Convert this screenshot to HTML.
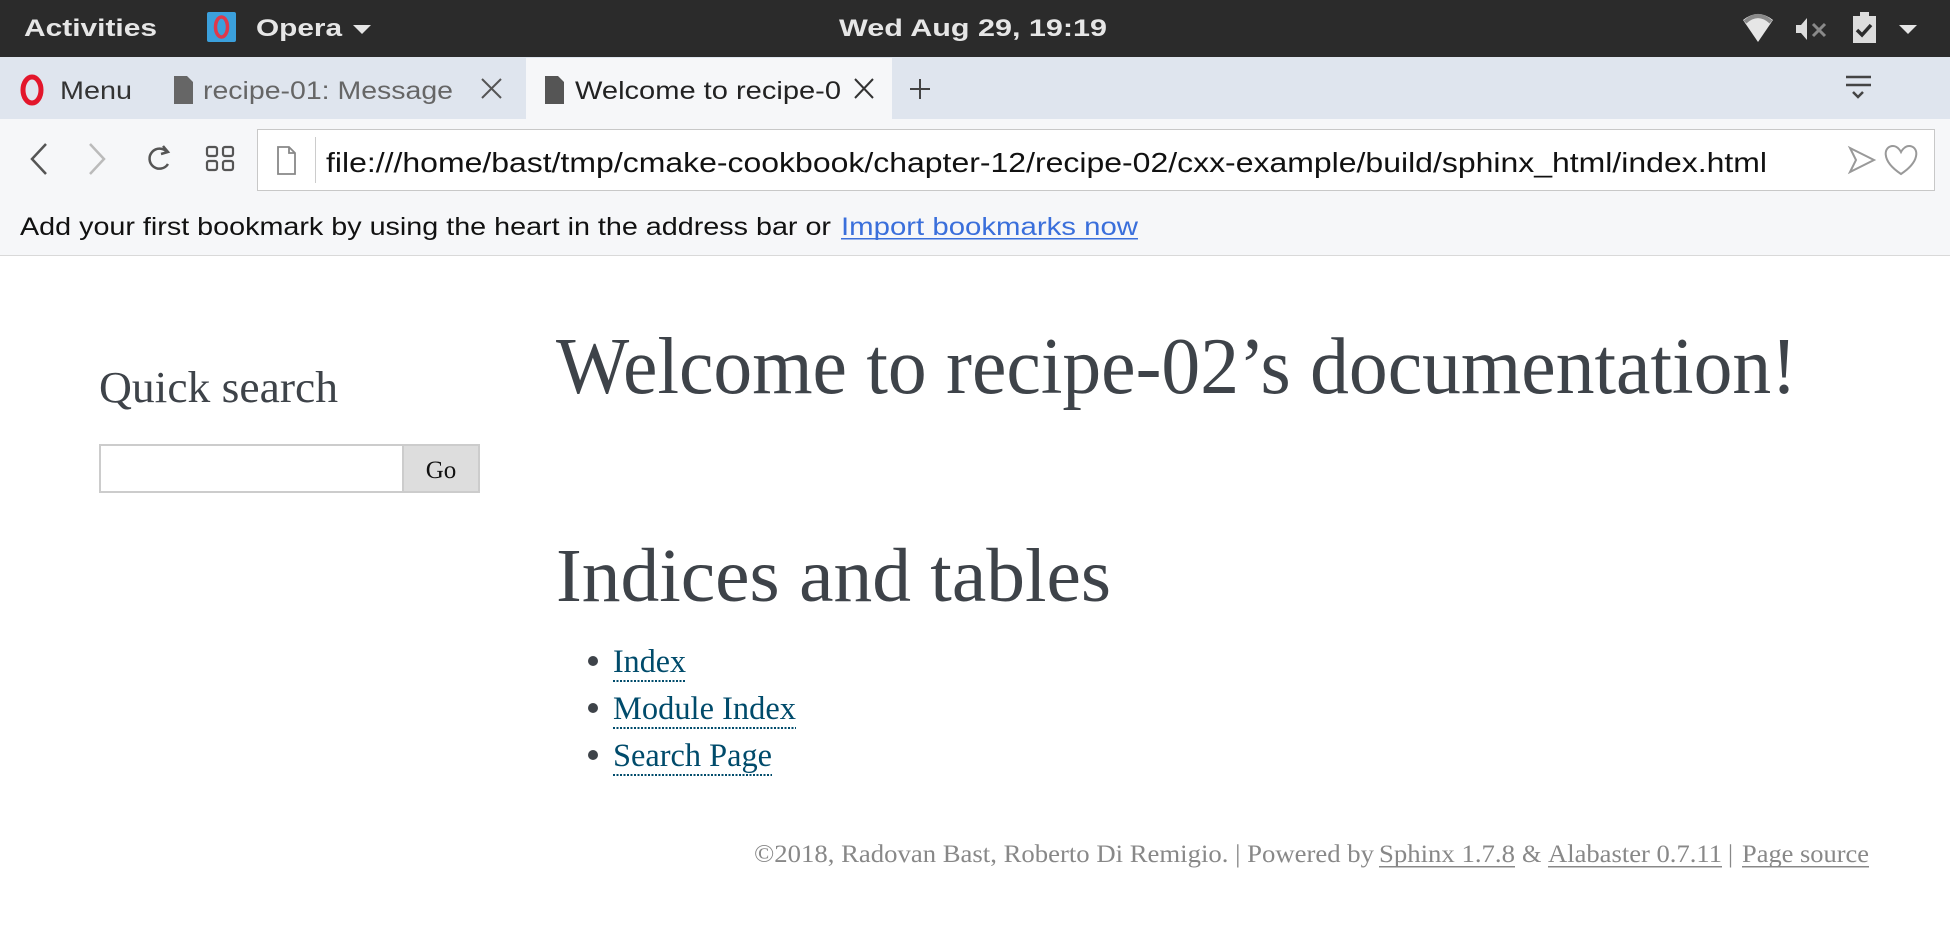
<!DOCTYPE html>
<html><head><meta charset="utf-8"><style>
html,body{margin:0;padding:0;background:#fff;width:1950px;height:943px;overflow:hidden}
svg{display:block}
</style></head><body>
<svg width="1950" height="943" viewBox="0 0 1950 943" xmlns="http://www.w3.org/2000/svg">
<rect width="1950" height="943" fill="#fff"/>
<!-- top bar -->
<rect width="1950" height="57" fill="#2b2b2b"/>
<g font-family="Liberation Sans, DejaVu Sans, sans-serif" font-weight="bold" font-size="24" fill="#e6e6e6">
<text x="24" y="36" textLength="133" lengthAdjust="spacingAndGlyphs">Activities</text>
<text x="256" y="36" textLength="86" lengthAdjust="spacingAndGlyphs">Opera</text>
<text x="839" y="36" textLength="268" lengthAdjust="spacingAndGlyphs">Wed Aug 29, 19:19</text>
</g>
<rect x="207" y="12" width="29" height="30" rx="2" fill="#3ba0dc"/>
<ellipse cx="221.5" cy="27" rx="6" ry="10" fill="none" stroke="#e0384a" stroke-width="3.5"/>
<path d="M353 25 L371 25 L362 34 Z" fill="#e6e6e6"/>
<path d="M1743 20 Q1758 8 1773 20 L1758 42 Z" fill="#e6e6e6"/>
<path d="M1745 22 Q1758 10 1771 22" stroke="#8a8a8a" stroke-width="4" fill="none"/>
<path d="M1796 25 h5 l6 -7 v22 l-6 -7 h-5 Z" fill="#dcdcdc"/>
<path d="M1813 24 l12 12 M1825 24 l-12 12" stroke="#8a8a8a" stroke-width="3"/>
<rect x="1853" y="16" width="23" height="27" fill="#dcdcdc"/><rect x="1860" y="12" width="9" height="5" fill="#dcdcdc"/>
<path d="M1857 30 l5 5 l9 -10" stroke="#2b2b2b" stroke-width="3.5" fill="none"/>
<path d="M1899 25 L1917 25 L1908 34 Z" fill="#e6e6e6"/>
<!-- tab bar -->
<rect y="57" width="1950" height="62" fill="#dfe5ee"/>
<rect x="526" y="58" width="366" height="62" fill="#f6f7f9"/>
<ellipse cx="32" cy="90" rx="9" ry="13" fill="none" stroke="#e3162b" stroke-width="5"/>
<g font-family="Liberation Sans, DejaVu Sans, sans-serif" font-size="25">
<text x="60" y="99" fill="#333" textLength="72" lengthAdjust="spacingAndGlyphs">Menu</text>
<text x="203" y="99" fill="#666" textLength="250" lengthAdjust="spacingAndGlyphs">recipe-01: Message</text>
<text x="575" y="99" fill="#222" textLength="266" lengthAdjust="spacingAndGlyphs">Welcome to recipe-0</text>
</g>
<path d="M174 76 h13 l6 6 v22 h-19 Z" fill="#666"/>
<path d="M545 76 h13 l6 6 v22 h-19 Z" fill="#555"/>
<path d="M482 79 l19 19 M501 79 l-19 19" stroke="#555" stroke-width="2"/>
<path d="M855 79 l18 19 M873 79 l-18 19" stroke="#333" stroke-width="2"/>
<path d="M920 79 v20 M910 89 h20" stroke="#444" stroke-width="2"/>
<path d="M1846 77 h25 M1846 85 h25 M1853 92 l5 5 l5 -5" stroke="#444" stroke-width="2.5" fill="none"/>
<!-- toolbar -->
<rect y="119" width="1950" height="136" fill="#f6f7f9"/>
<rect y="255" width="1950" height="1" fill="#d9d9d9"/>
<path d="M46 144 L32 159 L46 174" stroke="#555" stroke-width="2.5" fill="none"/>
<path d="M90 144 L104 159 L90 174" stroke="#bbb" stroke-width="2.5" fill="none"/>
<path d="M167 152 A10 10 0 1 0 168 164" stroke="#555" stroke-width="2.5" fill="none"/>
<path d="M163 146 l5 6 l-7 2" stroke="#555" stroke-width="2.5" fill="none"/>
<g fill="none" stroke="#555" stroke-width="2.2"><rect x="207" y="147" width="10" height="9" rx="2"/><rect x="223" y="147" width="10" height="9" rx="2"/><rect x="207" y="161" width="10" height="9" rx="2"/><rect x="223" y="161" width="10" height="9" rx="2"/></g>
<rect x="257.5" y="129.5" width="1677" height="61" fill="#fff" stroke="#c8c8c8"/>
<path d="M278 147 h11 l6 6 v21 h-17 Z M289 147 v6 h6" stroke="#888" stroke-width="1.8" fill="none"/>
<rect x="315" y="137" width="1" height="46" fill="#ccc"/>
<text x="326" y="172" font-family="Liberation Sans, DejaVu Sans, sans-serif" font-size="28" fill="#111" textLength="1441" lengthAdjust="spacingAndGlyphs">file:///home/bast/tmp/cmake-cookbook/chapter-12/recipe-02/cxx-example/build/sphinx_html/index.html</text>
<path d="M1850 148 L1874 160 L1850 172 L1856 160 Z" stroke="#999" stroke-width="2" fill="none"/>
<path d="M1901 174 C1880 160 1884 146 1893 146 C1898 146 1901 152 1901 152 C1901 152 1904 146 1909 146 C1918 146 1922 160 1901 174 Z" stroke="#999" stroke-width="2" fill="none"/>
<g font-family="Liberation Sans, DejaVu Sans, sans-serif" font-size="25">
<text x="20" y="235" fill="#111" textLength="811" lengthAdjust="spacingAndGlyphs">Add your first bookmark by using the heart in the address bar or</text>
<text x="841" y="235" fill="#3a6fdb" textLength="297" lengthAdjust="spacingAndGlyphs">Import bookmarks now</text>
</g>
<rect x="841" y="238" width="297" height="1.5" fill="#3a6fdb"/>
<!-- content -->
<g font-family="Liberation Serif, serif" fill="#3e4349">
<text x="99" y="402" font-size="44" textLength="239" lengthAdjust="spacingAndGlyphs">Quick search</text>
<text x="556" y="393" font-size="80" textLength="1241" lengthAdjust="spacingAndGlyphs">Welcome to recipe-02’s documentation!</text>
<text x="556" y="601" font-size="76" textLength="555" lengthAdjust="spacingAndGlyphs">Indices and tables</text>
</g>
<rect x="100" y="445" width="303" height="47" fill="#fff" stroke="#ccc" stroke-width="2"/>
<rect x="403" y="445" width="76" height="47" fill="#ddd" stroke="#ccc" stroke-width="2"/>
<text x="441" y="478" font-family="Liberation Serif, serif" font-size="25" fill="#111" text-anchor="middle">Go</text>
<g fill="#3e4349"><circle cx="593" cy="661" r="5"/><circle cx="593" cy="708" r="5"/><circle cx="593" cy="755" r="5"/></g>
<g font-family="Liberation Serif, serif" font-size="33" fill="#004b6b">
<text x="613" y="672" textLength="73" lengthAdjust="spacingAndGlyphs">Index</text>
<text x="613" y="719" textLength="183" lengthAdjust="spacingAndGlyphs">Module Index</text>
<text x="613" y="766" textLength="159" lengthAdjust="spacingAndGlyphs">Search Page</text>
</g>
<g stroke="#004b6b" stroke-width="2" stroke-dasharray="2 1.5">
<path d="M613 681 h73"/><path d="M613 728 h183"/><path d="M613 775 h159"/>
</g>
<g font-family="Liberation Serif, serif" font-size="25" fill="#888">
<text x="754" y="862" textLength="620" lengthAdjust="spacingAndGlyphs">©2018, Radovan Bast, Roberto Di Remigio. | Powered by</text>
<text x="1379" y="862" textLength="136" lengthAdjust="spacingAndGlyphs">Sphinx 1.7.8</text>
<text x="1522" y="862">&amp;</text>
<text x="1548" y="862" textLength="174" lengthAdjust="spacingAndGlyphs">Alabaster 0.7.11</text>
<text x="1728" y="862">|</text>
<text x="1742" y="862" textLength="127" lengthAdjust="spacingAndGlyphs">Page source</text>
</g>
<g fill="#888"><rect x="1379" y="866" width="136" height="1.5"/><rect x="1548" y="866" width="174" height="1.5"/><rect x="1742" y="866" width="127" height="1.5"/></g>
</svg>
</body></html>
